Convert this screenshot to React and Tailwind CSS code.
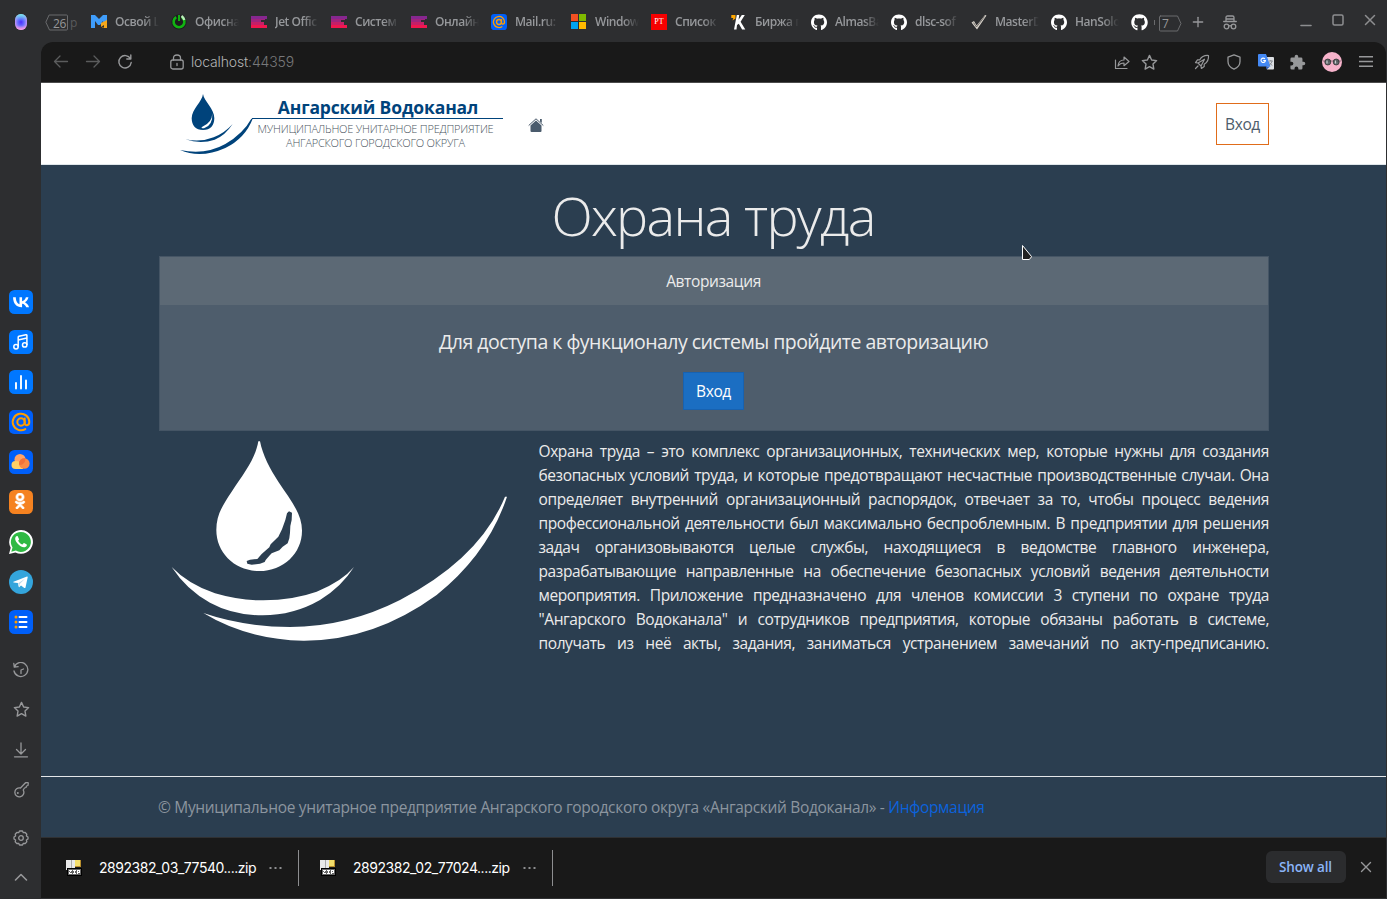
import React from "react";
import { FaGithub, FaOdnoklassniki } from "react-icons/fa";
import { LuPlus } from "react-icons/lu";

const line = {
  fill: "none",
  stroke: "currentColor",
  strokeLinecap: "round",
  strokeLinejoin: "round",
};

function MaxIcon() {
  return (
    <svg viewBox="0 0 16 16" className="size-4">
      <path d="M0 1h4l4 4 4-4h4v6l-4 2V7l-3 4H7L4 7v7H0z" fill="#3f9dfb" />
      <path d="M10 9l6-3v8h-3v-3l-3 2z" fill="#f6a81c" />
      <path d="M11 13h2v1h-2z" fill="#8a5a10" />
    </svg>
  );
}

function OfficeIcon() {
  return (
    <svg viewBox="0 0 16 16" className="size-4">
      <circle cx="8" cy="8" r="7.6" fill="#1d1e1f" />
      <path d="M5.2 3.2a5.4 5.4 0 1 0 5.6 0" fill="none" stroke="#12b312" strokeWidth="2.6" />
      <path d="M8 1v6" stroke="#10c010" strokeWidth="1.8" />
      <path d="M10.5 2a7 7 0 0 1 2.8 4" fill="none" stroke="#b9efb9" strokeWidth="2.4" />
    </svg>
  );
}

function JetIcon() {
  return (
    <svg viewBox="0 0 16 16" className="size-4">
      <path d="M0 2h16v3H0z" fill="#86278f" />
      <path d="M0 5h10v3H0z" fill="#a0247e" />
      <path d="M0 8h13v3H0z" fill="#c51f68" />
      <path d="M0 11h16v3H0z" fill="#f0164f" />
      <path d="M10 5h4v1h-4z" fill="#a0247e" />
    </svg>
  );
}

function AtIcon({ className }) {
  return (
    <svg viewBox="0 0 24 24" className={className}>
      <rect width="24" height="24" rx="5" fill="#005ff9" />
      <g fill="none" stroke="#ff9e00" strokeWidth="2" strokeLinecap="round">
        <circle cx="12" cy="12" r="3.7" />
        <path d="M15.7 8.6v4.2c0 3.4 4.6 3.1 4.6-.8a8.3 8.3 0 1 0-4 7.1" />
      </g>
    </svg>
  );
}

function WindowsIcon() {
  return (
    <svg viewBox="0 0 16 16" className="size-4">
      <path d="M0 0h7v7H0z" fill="#f25022" />
      <path d="M8 0h7v7H8z" fill="#7fba00" />
      <path d="M0 8h7v7H0z" fill="#00a4ef" />
      <path d="M8 8h7v7H8z" fill="#ffb900" />
    </svg>
  );
}

function PtIcon() {
  return (
    <span className="flex size-4 items-center justify-center bg-[#f60000] font-['Liberation_Serif',serif] text-[8px] leading-none text-white">
      PT
    </span>
  );
}

function KworkIcon() {
  return (
    <svg viewBox="0 0 16 16" className="size-4">
      <path d="M.3 1H4.500v3.500L1.500 6.500 2.300 4H.3z" fill="#ffa800" />
      <path d="M5.800 1h2.400L7.600 5.800 10.800 1h3L9.600 7.800 14.300 15.500h-3.200L7.800 9.800 6 11l-.5 4.500H3z" fill="#fff" />
    </svg>
  );
}

function CheckIcon() {
  return (
    <svg viewBox="0 0 16 16" className="size-4">
      <path d="M.5 8.500L3 7l2.600 4.500L14 1l1.500.4L6 15.600z" fill="#d8d3cb" />
      <path d="M2.500 8.600L5.500 13 13.500 2.500" fill="none" stroke="#5b5753" strokeWidth=".8" />
    </svg>
  );
}

const Hub = () => <FaGithub className="size-[17px] text-white" />;

const tabs = [
  [MaxIcon, "Освой L"],
  [OfficeIcon, "Офисна"],
  [JetIcon, "Jet Offic"],
  [JetIcon, "Систем"],
  [JetIcon, "Онлайн"],
  [() => <AtIcon className="size-4" />, "Mail.ru:"],
  [WindowsIcon, "Window"],
  [PtIcon, "Список"],
  [KworkIcon, "Биржа п"],
  [Hub, "AlmasBa"],
  [Hub, "dlsc-sof"],
  [CheckIcon, "MasterD"],
  [Hub, "HanSolo"],
];

function TabBar() {
  return (
    <div className="flex h-[42px] items-center">
      <div className="flex w-[41px] justify-center pt-[2px] pl-[1px]">
        <svg viewBox="0 0 12 16" className="h-4 w-3">
          <defs>
            <radialGradient id="opera" cx=".5" cy=".5" r=".55">
              <stop offset="0" stopColor="#4a2bff" />
              <stop offset=".5" stopColor="#6a70ff" />
              <stop offset="1" stopColor="#d69cf5" />
            </radialGradient>
            <linearGradient id="operaTop" x1="0" y1="0" x2="0" y2="1">
              <stop offset="0" stopColor="#6bf0e6" />
              <stop offset=".45" stopColor="#5bb4ff" stopOpacity="0" />
              <stop offset=".7" stopColor="#ff8ad8" stopOpacity="0" />
              <stop offset="1" stopColor="#ffa0e0" />
            </linearGradient>
          </defs>
          <rect width="12" height="16" rx="6" fill="url(#opera)" />
          <rect width="12" height="16" rx="6" fill="url(#operaTop)" />
        </svg>
      </div>
      <div className="flex w-[50px] items-center pt-[3px] pl-[4px]">
        <div className="grid h-[17px] w-[24px] items-center">
          <svg viewBox="0 0 24 17" className="col-start-1 row-start-1 h-[17px] w-[24px] text-[#6a6b6d]">
            <path d="M4.500 1h17q1 0 1 1v13q0 1-1 1h-17L1 8.500z" {...line} />
          </svg>
          <span className="col-start-1 row-start-1 pt-[2px] pl-[8px] text-[12px] leading-none tracking-[-0.3px] text-[#97989a]">26</span>
        </div>
        <span className="pl-[1px] text-[12px] leading-none text-[#5a5b5d]">p</span>
      </div>
      <div className="flex pt-[2px]">
        {tabs.map(([Icon, label], i) => (
          <div key={i} className="flex w-[80px] items-center gap-[8px]">
            <span className="flex size-4 shrink-0 items-center justify-center">
              <Icon />
            </span>
            <span className="w-[44px] overflow-hidden text-[12px] leading-[16px] font-semibold tracking-[-0.45px] whitespace-nowrap text-[#96989b] [mask-image:linear-gradient(to_right,black_65%,transparent)]">
              {label}
            </span>
          </div>
        ))}
        <span className="flex w-[27px] items-center">
          <Hub />
          <span className="ml-[6px] h-[5px] w-[1px] bg-[#6a6b6d]" />
        </span>
      </div>
      <div className="grid h-[17px] w-[24px] translate-y-[2px] items-center">
        <svg viewBox="0 0 24 17" className="col-start-1 row-start-1 h-[17px] w-[24px] text-[#6a6b6d]">
          <path d="M2.500 1h17l3.500 7.500-3.500 7.500h-17q-1 0-1-1V2q0-1 1-1z" {...line} />
        </svg>
        <span className="col-start-1 row-start-1 pt-[1px] pl-[4px] text-[12px] leading-none text-[#97989a]">7</span>
      </div>
      <LuPlus className="mt-[2px] ml-[8px] size-[16px] text-[#97989a]" />
      <svg viewBox="0 0 14 15" className="mt-[2px] ml-[17px] h-[15px] w-[14px] text-[#97989a]">
        <g {...line} strokeWidth="1.3">
          <path d="M3 6V2.500Q3 1 4.500 1h5Q11 1 11 2.500V6M.7 6.500h12.600M3 4h8" />
          <circle cx="3.500" cy="11.500" r="2.300" />
          <circle cx="10.500" cy="11.500" r="2.300" />
          <path d="M5.800 11q1.200-.8 2.400 0" />
        </g>
      </svg>
      <div className="ml-auto flex items-center gap-[20px] pr-[11px] text-[#8d8e90]">
        <svg viewBox="0 0 12 12" className="size-3">
          <path d="M1 10.500h10" {...line} strokeWidth="1.600" />
        </svg>
        <svg viewBox="0 0 12 12" className="mb-[3px] size-3">
          <rect x="1" y="1" width="10" height="10" rx="1.500" {...line} strokeWidth="1.500" />
        </svg>
        <svg viewBox="0 0 12 12" className="mb-[3px] size-3">
          <path d="M1.500 1.500l9 9M10.500 1.500l-9 9" {...line} strokeWidth="1.500" />
        </svg>
      </div>
    </div>
  );
}

const STAR = "M8 1.300l2 4.300 4.700.6-3.400 3.300.8 4.700L8 11.900l-4.100 2.300.8-4.700L1.300 6.200 6 5.600z";

function Toolbar() {
  return (
    <div className="flex h-[41px] items-center rounded-t-[12px] border-b border-[#4b4b4b] bg-[#191919] text-[#97989a]">
      <svg viewBox="0 0 16 16" className="ml-[12px] size-4 text-[#5b5c5d]">
        <path d="M14.500 7.500H1.500M7 2L1.500 7.500 7 13" {...line} strokeWidth="1.300" />
      </svg>
      <svg viewBox="0 0 16 16" className="ml-[16px] size-4 text-[#5b5c5d]">
        <path d="M1.500 7.500h13M9 2L14.500 7.500 9 13" {...line} strokeWidth="1.300" />
      </svg>
      <svg viewBox="0 0 16 16" className="ml-[16px] size-4">
        <path d="M13.500 4.800A6.200 6.200 0 1 0 14.200 8.500M13.800 1v4H9.800" {...line} strokeWidth="1.400" />
      </svg>
      <svg viewBox="0 0 14 16" className="ml-[37px] h-4 w-[14px]">
        <rect x=".8" y="6" width="12.400" height="9" rx="2" {...line} strokeWidth="1.300" />
        <path d="M3.500 6V4q0-3 3.500-3t3.500 3v2M7 9.500v2" {...line} strokeWidth="1.300" />
      </svg>
      <div className="ml-[7px] font-[Inter,sans-serif] text-[14px] leading-[20px] font-light tracking-[-0.15px] text-[#b4b5b6]">
        localhost<span className="text-[#77787a]">:44359</span>
      </div>
      <div className="ml-auto flex items-center pr-[12px]">
        <svg viewBox="0 0 16 16" className="size-4">
          <path d="M1.500 6v8.500H13M4 12q.5-6 6-6V3l5 4.500-5 4.200V9q-4 0-6 3z" {...line} strokeWidth="1.200" />
        </svg>
        <svg viewBox="0 0 16 16" className="ml-[11px] size-[17px]">
          <path d={STAR} {...line} strokeWidth="1.300" />
        </svg>
        <svg viewBox="0 0 16 16" className="ml-[36px] size-4">
          <path d="M14.500 1.500Q8.500 1 5.800 5.800L3.500 5.800 1.500 8.600l2.500.4 3 3 .4 2.500 2.800-2v-2.300Q15 7.500 14.500 1.500zM4 9L10.500 5.200 7 12M1.500 14.500L4 12" {...line} strokeWidth="1.200" />
        </svg>
        <svg viewBox="0 0 16 16" className="ml-[16px] size-4">
          <path d="M8 .8l6 2.400v4.300q0 5.200-6 7.700-6-2.500-6-7.700V3.200z" {...line} strokeWidth="1.300" />
        </svg>
        <svg viewBox="0 0 16 16" className="ml-[16px] size-4">
          <path d="M7 3h8q1 0 1 1v10.500q0 1-1 1H9z" fill="#dcdfe3" />
          <path d="M1 0h7l4.500 12.500H1q-1 0-1-1V1q0-1 1-1z" fill="#4489f5" />
          <path d="M8.700 15.500l-.8-3h4z" fill="#2c5fc4" />
          <path d="M10.800 7h4M12.800 6v1M14.200 7q-.8 3-3 4M11.600 8.500q1 2 2.800 3" stroke="#7a7f86" fill="none" strokeWidth=".8" />
          <path d="M6.900 4.900a2.200 2.200 0 1 0 .5 1.700H5.200" stroke="#fff" fill="none" strokeWidth="1.100" />
        </svg>
        <svg viewBox="0 0 24 24" className="ml-[15px] size-[17px]">
          <path d="M20.500 11H19V7a2 2 0 0 0-2-2h-4V3.500a2.500 2.500 0 0 0-5 0V5H4a2 2 0 0 0-2 2v3.800h1.500a2.700 2.700 0 0 1 0 5.400H2V20a2 2 0 0 0 2 2h3.800v-1.500a2.700 2.700 0 0 1 5.400 0V22H17a2 2 0 0 0 2-2v-4h1.500a2.500 2.500 0 0 0 0-5z" fill="currentColor" />
        </svg>
        <svg viewBox="0 0 20 20" className="ml-[16px] size-5">
          <circle cx="10" cy="10" r="10" fill="#f7b3cb" />
          <circle cx="5.800" cy="10" r="3" fill="#63686c" stroke="#272727" strokeWidth=".7" />
          <circle cx="14.200" cy="10" r="3" fill="#63686c" stroke="#272727" strokeWidth=".7" />
          <path d="M1 9h18" stroke="#333" strokeWidth=".5" />
          <path d="M5 8.500v3M13.500 8.500v3" stroke="#c9cfd0" strokeWidth="1.200" />
        </svg>
        <svg viewBox="0 0 16 14" className="ml-[16px] h-[14px] w-4">
          <path d="M1 1.800h14M1 6.500h14M1 11.200h14" {...line} strokeLinecap="butt" strokeWidth="1.500" />
        </svg>
      </div>
    </div>
  );
}

function Tile({ color, children }) {
  return (
    <svg viewBox="0 0 24 24" className="size-6">
      <rect width="24" height="24" rx="5.500" fill={color} />
      {children}
    </svg>
  );
}

function SideBar() {
  return (
    <div className="flex w-[41px] shrink-0 flex-col items-center pt-[248px] pl-[1px] text-[#97989a]">
      <div className="flex flex-col gap-4">
        <Tile color="#0077ff">
          <path fill="#fff" d="M12.770 17.290c-5.470 0-8.590-3.750-8.720-9.990h2.740c.09 4.580 2.110 6.520 3.710 6.920V7.300h2.580v3.950c1.580-.17 3.240-1.970 3.800-3.950h2.580c-.43 2.440-2.230 4.240-3.510 4.980 1.280.6 3.330 2.170 4.110 5.010h-2.840c-.61-1.900-2.130-3.370-4.140-3.570v3.570h-.31z" />
        </Tile>
        <Tile color="#0077ff">
          <g fill="none" stroke="#fff" strokeWidth="1.500" strokeLinejoin="round">
            <circle cx="7" cy="16.700" r="2.200" />
            <circle cx="15.700" cy="14.900" r="2.200" />
            <path d="M9.200 16.700V7.200q0-.8.800-1l6.900-1.400q1-.2 1 .8v9.300M9.200 10l8.700-1.900" />
          </g>
        </Tile>
        <Tile color="#0077ff">
          <path d="M7 13v5.500M12 6v12.500M17 10.500v8" stroke="#fff" strokeWidth="1.900" strokeLinecap="round" />
        </Tile>
        <AtIcon className="size-6" />
        <Tile color="#005ff9">
          <circle cx="11" cy="9.500" r="5.500" fill="#ffa467" />
          <path d="M6.500 11a4 4 0 0 0 0 8H14V14q-3-3-7.500-3z" fill="#ffd064" />
          <circle cx="15.300" cy="13.500" r="5.300" fill="#f98a45" />
          <path d="M10 13.500a5.300 5.300 0 0 1 6.200-5.200 5.500 5.500 0 0 1-5.800 6.700z" fill="#f27238" />
        </Tile>
        <Tile color="#f58220">
          <FaOdnoklassniki x="3" y="3" width="18" height="18" color="#fff" stroke="#fff" strokeWidth="24" />
        </Tile>
        <svg viewBox="0 0 24 24" className="size-6">
          <path d="M0 24l1.700-6.200A11.900 11.900 0 1 1 6.400 22.400z" fill="#fff" />
          <path d="M2.300 21.700l1.200-4.300a10 10 0 1 1 3.400 3.200z" fill="#2fb943" />
          <path d="M8.800 6.500c-.4-.7-1.300-.5-1.800.1-1.700 2-.4 4.800 1.500 6.900 2.200 2.500 4.800 4.100 7.300 3.700 1.500-.3 2.300-1.400 2-2.700l-2.700-1.400c-.7-.2-1.200 1.400-1.800 1.400-1.500-.3-3.700-2.500-4.100-3.700 0-.5 1-1 .9-1.600z" fill="#fff" />
        </svg>
        <svg viewBox="0 0 24 24" className="size-6">
          <circle cx="12" cy="12" r="12" fill="#34a5dc" />
          <path d="M4.500 11.800L18 6.500q.8-.2.700.7l-2.200 10.200q-.3 1-1.200.5l-3.300-2.500-1.600 1.600q-.5.500-.7-.2l-.9-3.900-4.200-.5q-.8-.3-.1-.6z" fill="#fff" />
          <path d="M9.200 13.200l6.800-4.400-5.300 5.200-.5 2.800z" fill="#b9d8ea" />
        </svg>
        <Tile color="#005ff9">
          <path d="M10.500 7h7M10.500 12h7M10.500 17h7" stroke="#fff" strokeWidth="2" strokeLinecap="round" />
          <g fill="#ff9e00">
            <circle cx="7" cy="7" r="1.500" />
            <circle cx="7" cy="12" r="1.500" />
            <circle cx="7" cy="17" r="1.500" />
          </g>
        </Tile>
      </div>
      <svg viewBox="0 0 16 16" className="mt-[28px] size-4">
        <path d="M1.300 5A7 7 0 1 1 1 9M.8 1.500l.5 3.700 3.800-.5M8 11.500V8l2.500-1" {...line} strokeWidth="1.300" />
      </svg>
      <svg viewBox="0 0 16 16" className="mt-[23px] size-[17px]">
        <path d={STAR} {...line} strokeWidth="1.300" />
      </svg>
      <svg viewBox="0 0 16 16" className="mt-[24px] size-4">
        <path d="M8 1v10.500M3.500 7.500L8 12l4.500-4.500M1.500 14.800h13" {...line} strokeWidth="1.300" />
      </svg>
      <svg viewBox="0 0 16 16" className="mt-[24px] size-4">
        <path d="M7.500 6L12 1.200q1-1 2.500-.6l.8.200-.3 2.700-1.500.5-.5 1.500-1.500.5-1.300 2A4.500 4.500 0 1 1 7.500 6z" {...line} strokeWidth="1.300" />
        <circle cx="4.800" cy="11" r="1" fill="currentColor" />
      </svg>
      <svg viewBox="0 0 16 16" className="mt-[32px] size-4">
        <path d="M6.500 1h3l.8 1.700 1.900-.2 1.600 1.700-.4 1.800L15 7v2l-1.600 1 .4 1.900-1.600 1.600-1.900-.2L9.500 15h-3l-.8-1.700-1.900.2-1.600-1.600.4-1.900L1 9V7l1.600-1-.4-1.800 1.600-1.700 1.900.2z" {...line} strokeWidth="1.300" />
        <circle cx="8" cy="8" r="2.300" {...line} strokeWidth="1.300" />
      </svg>
      <svg viewBox="0 0 16 16" className="mt-[23px] size-4">
        <path d="M2.500 11L8 5.500l5.500 5.500" {...line} strokeWidth="1.600" />
      </svg>
    </div>
  );
}

function BrandMark() {
  return (
    <svg viewBox="0 0 350 192" className="col-start-1 row-start-1 h-[64px] w-[117px]" preserveAspectRatio="xMinYMin meet">
      <g fill="#00437b">
        <path d="M69 0C72 22 103 44 103 73Q102 108 69 108 36 108 35 73C36 44 66 24 69 0z" />
        <path d="M16 136Q62 146 101 130 134 117 158 90 135 125 104 137 62 151 16 136z" />
        <path d="M0 168Q76 184 136 150 190 118 214 74L218 74Q196 132 136 162 62 195 0 168z" />
      </g>
      <path d="M97 58Q96 87 67 98 60 103 72 103 99 95 97 58z" fill="#fff" />
    </svg>
  );
}

function Header() {
  return (
    <header className="flex h-[82px] border-b border-[#dfe6ea] bg-white pr-[117px] pl-[139px]">
      <div className="grid w-[325px] grid-cols-[325px] pt-[11px]">
        <BrandMark />
        <div className="col-start-1 row-start-1 ml-[72px] w-[251px] text-center whitespace-nowrap">
          <div className="flex h-[25px] justify-center border-b border-[#00437b] pl-[1px] text-[17.500px] leading-[26px] font-bold tracking-[-0.15px] text-[#00437b]">
            Ангарский Водоканал
          </div>
          <div className="flex w-[247px] flex-col items-center pt-[3px] text-[11px] leading-[14px] font-light tracking-[-0.230px] text-[#4a5460]">
            <span>МУНИЦИПАЛЬНОЕ УНИТАРНОЕ ПРЕДПРИЯТИЕ</span>
            <span>АНГАРСКОГО ГОРОДСКОГО ОКРУГА</span>
          </div>
        </div>
      </div>
      <svg viewBox="0 0 16 15" className="mt-[35px] ml-[23px] h-[15px] w-4">
        <path d="M2.500 7.500L8 2.500l5.500 5V13q0 1-1 1h-9q-1 0-1-1z" fill="#4a5b6c" />
        <path d="M.7 7.500L8 .8l7.300 6.700" fill="none" stroke="#4a5b6c" strokeWidth="1" />
        <path d="M12 1h1.800v4L12 3.500z" fill="#4a5b6c" />
      </svg>
      <a className="mt-[20px] ml-auto flex h-[42px] w-[53px] items-center justify-center border border-[#e06c1a] pt-[2px] text-[15.500px] tracking-[-0.4px] text-[#4e5d6c]">
        Вход
      </a>
    </header>
  );
}

const paragraph = [
  "Охрана труда – это комплекс организационных, технических мер, которые нужны для создания",
  "безопасных условий труда, и которые предотвращают несчастные производственные случаи. Она",
  "определяет внутренний организационный распорядок, отвечает за то, чтобы процесс ведения",
  "профессиональной деятельности был максимально беспроблемным. В предприятии для решения",
  "задач организовываются целые службы, находящиеся в ведомстве главного инженера,",
  "разрабатывающие направленные на обеспечение безопасных условий ведения деятельности",
  "мероприятия. Приложение предназначено для членов комиссии 3 ступени по охране труда",
  "\"Ангарского Водоканала\" и сотрудников предприятия, которые обязаны работать в системе,",
  "получать из неё акты, задания, заниматься устранением замечаний по акту-предписанию.",
];

function DropLogo() {
  return (
    <svg viewBox="0 0 1080 660" className="-mt-[9px] h-[220px] w-[360px] shrink-0">
      <g fill="#fff">
        <path d="M295 34h5C308 75 330 118 355 155 390 208 426 250 426 302 426 370 370 423 298 423 226 423 169 370 169 300 169 255 188 225 215 185 250 132 287 85 295 34z" />
        <path d="M35 411Q85 463 165 490 240 512 310 511 400 510 470 485 545 455 582 411 545 470 480 510 400 556 308 556 220 556 150 518 80 480 35 411z" />
        <path d="M130 549Q250 590 390 591 560 591 720 510 960 385 1035 200L1041 200Q985 370 830 495 640 633 430 632 260 628 130 549z" />
      </g>
      <path
        d="M381 250L387 244 396 248 395 270 391 288 390 308 388 325 383 340 368 350 358 361 335 370 328 377 317 390 314 396 300 401 275 404 262 401 260 393 270 389 292 387 305 372 328 352 332 343 355 320 366 298 376 270z"
        fill="#2b3e50"
      />
    </svg>
  );
}

function Page() {
  return (
    <div className="flex h-[754px] flex-col bg-[#2b3e50]">
      <Header />
      <main className="grow pr-[117px] pl-[118px]">
        <h1 className="flex h-[91px] items-center justify-center pt-[8px] pr-[2px] text-[54px] leading-none font-light tracking-[-1.700px] text-[#ebebeb]">
          Охрана труда
        </h1>
        <section className="h-[175px] border border-[#455565] bg-[#4e5d6c] text-center font-[450] text-[#ebebeb]">
          <div className="h-[48px] bg-[#5c6975] pr-[1px] text-[15.500px] leading-[49px] tracking-[-0.380px]">Авторизация</div>
          <div className="pt-[22px] pr-[1px] text-[19.500px] leading-[30px] tracking-[-0.52px]">
            Для доступа к функционалу системы пройдите авторизацию
          </div>
          <button className="mt-[15px] mr-[1px] h-[38px] w-[61px] border border-[#1862b0] bg-[#1b6ec2] pt-[2px] text-[15.500px] tracking-[-0.4px] text-white">
            Вход
          </button>
        </section>
        <div className="flex pt-[8px]">
          <div className="w-[379.500px] shrink-0 pl-[1px]">
            <DropLogo />
          </div>
          <div className="grow">
            {paragraph.map((text) => (
              <p key={text} className="h-6 text-justify text-[15.500px] leading-[25px] font-[450] tracking-[-0.4px] whitespace-nowrap text-[#ebebeb] [text-align-last:justify]">
                {text}
              </p>
            ))}
          </div>
        </div>
      </main>
      <footer className="h-[61px] border-t border-[#e3e6e9] pl-[117px] text-[15.500px] leading-[61px] tracking-[-0.325px] whitespace-nowrap text-[#8b959f]">
        © Муниципальное унитарное предприятие Ангарского городского округа «Ангарский Водоканал» -{" "}
        <a className="text-[#0b62dc]">Информация</a>
      </footer>
    </div>
  );
}

function ZipIcon() {
  return (
    <svg viewBox="0 0 16 17" className="h-[17px] w-4" shapeRendering="crispEdges">
      <path d="M0 1h9v10H0z" fill="#e9e9e9" />
      <path d="M5 1h1v10H5z" fill="#aaa" />
      <path d="M9 1h6v6H9z" fill="#f3dd6b" />
      <path d="M9 7h6v1H9zM14 1h1v7h-1z" fill="#b98f2d" />
      <path d="M1 9h15v8H1z" fill="#000" />
      <path d="M2 10h13v6H2z" fill="#666" />
      <path d="M3 11h3v1H3zM4 12h1v1H4zM3 13h1v1H3zM3 14h3v1H3zM7 11h3v1H7zM8 12h1v2H8zM7 14h3v1H7zM11 11h3v1h-3zM11 12h1v3h-1zM12 13h2v1h-2zM13 12h1v1h-1z" fill="#fff" />
    </svg>
  );
}

function Download({ name }) {
  return (
    <div className="flex h-[36px] w-[233px] shrink-0 items-center border-r border-[#8d8e90]">
      <ZipIcon />
      <span className="ml-[17px] w-[159px] font-[Inter,sans-serif] text-[14px] tracking-[-0.460px] whitespace-nowrap text-white">{name}</span>
      <svg viewBox="0 0 14 4" className="ml-[11px] h-1 w-[14px]">
        <path d="M.5 1h2v2h-2zM5.500 1h2v2h-2zM10.500 1h2v2h-2z" fill="#8d8e90" />
      </svg>
    </div>
  );
}

function Downloads() {
  return (
    <div className="flex h-[61.500px] items-center border-y border-[#303133] bg-[#191919] pl-[25px]">
      <div className="flex gap-[21px]">
        <Download name="2892382_03_77540....zip" />
        <Download name="2892382_02_77024....zip" />
      </div>
      <button className="mb-[1px] ml-auto h-8 w-20 rounded-[6px] bg-[#2b2c2e] pr-[7px] pl-[6px] text-[13.500px] font-semibold tracking-[-0.15px] text-[#8ab4f8]">Show all</button>
      <svg viewBox="0 0 12 12" className="mr-[14px] mb-[1px] ml-[14px] size-3 text-[#97989a]">
        <path d="M1.500 1.500l9 9M10.500 1.500l-9 9" {...line} strokeWidth="1.400" />
      </svg>
    </div>
  );
}

export default function App() {
  return (
    <div className="relative h-[899px] w-[1387px] overflow-hidden bg-[#2d2e30] font-['Open_Sans',sans-serif]">
      <TabBar />
      <div className="flex pr-[1px]">
        <SideBar />
        <div className="min-w-0 grow">
          <Toolbar />
          <Page />
          <Downloads />
        </div>
      </div>
      <svg viewBox="0 0 12 17" className="absolute top-[244px] left-[1021px] h-[17px] w-3">
        <path d="M1.500 1.500v14H8q1.500-.5 2.500-3z" fill="#222" stroke="#fff" strokeLinejoin="round" />
      </svg>
    </div>
  );
}
